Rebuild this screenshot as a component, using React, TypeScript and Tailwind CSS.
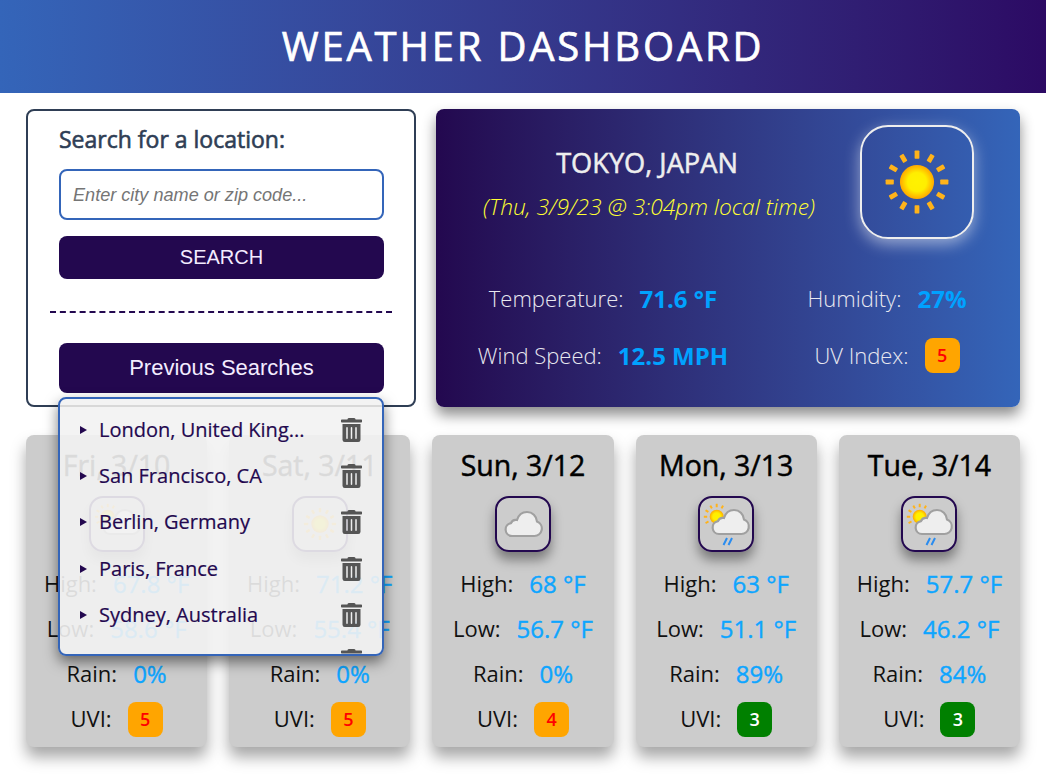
import type React from "react"
import { FaTrashAlt } from "react-icons/fa"

const FONT = "font-['Open_Sans',sans-serif]"
const ARIAL = "font-['Liberation_Sans',Arial,sans-serif]"

type IconKind = "sun" | "cloud" | "partly" | "showers"

function SunShape({ cx, cy, r, rays }: { cx: number; cy: number; r: number; rays: number[] }) {
  const id = `sun-${cx}-${cy}`
  return (
    <g>
      <defs>
        <radialGradient id={id}>
          <stop offset="0%" stopColor="#fff200" />
          <stop offset="55%" stopColor="#ffee00" />
          <stop offset="100%" stopColor="#ffa800" />
        </radialGradient>
      </defs>
      {rays.map((a) => (
        <rect
          key={a}
          x={cx - r * 0.14}
          y={cy - r * 1.84}
          width={r * 0.28}
          height={r * 0.48}
          rx={r * 0.04}
          fill="#ffb31a"
          transform={`rotate(${a} ${cx} ${cy})`}
        />
      ))}
      <circle cx={cx} cy={cy} r={r} fill={`url(#${id})`} />
    </g>
  )
}

const ALL_RAYS = [0, 30, 60, 90, 120, 150, 180, 210, 240, 270, 300, 330]
const PARTIAL_RAYS = [-120, -90, -60, -30, 0, 30]
const CLOUD = "M7 24a6.500 6.500 0 0 1-1-12.900C7 8.500 9.500 7.500 12 8C13.500 3 17.500 0 22 0c5.500 0 9.500 4 10 9.500a7.500 7.500 0 0 1-3 14.500z"

function WeatherIcon({ kind }: { kind: IconKind }) {
  return (
    <svg viewBox="0 0 52 52" className="h-full w-full">
      {kind === "sun" && <SunShape cx={26} cy={26} r={8.7} rays={ALL_RAYS} />}
      {kind === "cloud" && <path transform="translate(8 14)" d={CLOUD} fill="#eeeeee" stroke="#a0a0a0" strokeWidth="2.200" />}
      {kind === "partly" && (
        <>
          <SunShape cx={16.7} cy={18.7} r={7} rays={PARTIAL_RAYS} />
          <path transform="translate(12 12)" d={CLOUD} fill="#eeeeee" stroke="#a0a0a0" strokeWidth="2.200" />
        </>
      )}
      {kind === "showers" && (
        <>
          <SunShape cx={16.7} cy={18.7} r={7} rays={PARTIAL_RAYS} />
          <path transform="translate(12 12)" d={CLOUD} fill="#eeeeee" stroke="#a0a0a0" strokeWidth="2.200" />
          <path d="M23.500 47l3.500-7M28.500 47l3.500-7" stroke="#2a8cf0" strokeWidth="2" />
        </>
      )}
    </svg>
  )
}

function UvBadge({ uv, color, text }: { uv: number; color: string; text: string }) {
  return (
    <span className={`flex h-[35px] w-[35px] items-center justify-center rounded-lg text-[18px] font-semibold ${color} ${text}`}>
      {uv}
    </span>
  )
}

interface Day {
  date: string
  icon: IconKind
  high: string
  low: string
  rain: string
  uv: number
  color: string
  text: string
}

const days: Day[] = [
  { date: "Fri, 3/10", icon: "partly", high: "67.8 °F", low: "58.6 °F", rain: "0%", uv: 5, color: "bg-[#ffa500]", text: "text-[#ff0000]" },
  { date: "Sat, 3/11", icon: "sun", high: "71.2 °F", low: "55.4 °F", rain: "0%", uv: 5, color: "bg-[#ffa500]", text: "text-[#ff0000]" },
  { date: "Sun, 3/12", icon: "cloud", high: "68 °F", low: "56.7 °F", rain: "0%", uv: 4, color: "bg-[#ffa500]", text: "text-[#ff0000]" },
  { date: "Mon, 3/13", icon: "showers", high: "63 °F", low: "51.1 °F", rain: "89%", uv: 3, color: "bg-[#008000]", text: "text-white" },
  { date: "Tue, 3/14", icon: "showers", high: "57.7 °F", low: "46.2 °F", rain: "84%", uv: 3, color: "bg-[#008000]", text: "text-white" },
]

const previous = ["London, United King...", "San Francisco, CA", "Berlin, Germany", "Paris, France", "Sydney, Australia", ""]

function Stat({ label, value }: { label: string; value: string }) {
  return (
    <div className="flex h-[45px] items-center justify-center gap-4 pb-[2px]">
      <span className="text-[22px] text-[#111]">{label}</span>
      <span className="text-[24px] text-[#0ea5ff] [-webkit-text-stroke:0.4px]">{value}</span>
    </div>
  )
}

function HeroStat({ label, children }: { label: string; children: React.ReactNode }) {
  return (
    <div className="flex items-center justify-center gap-4">
      <span className="text-[22px] font-light">{label}</span>
      {children}
    </div>
  )
}

function DayCard({ day }: { day: Day }) {
  return (
    <div className="flex flex-col items-center rounded-lg bg-[#cccccc] pt-[11px] pb-[5px] shadow-[0_10px_15px_rgba(0,0,0,0.35)]">
      <h3 className="text-[28.500px] leading-[38px] text-black [-webkit-text-stroke:0.5px]">{day.date}</h3>
      <div className="mt-[12px] mb-[10px] h-[56px] w-[56px] rounded-[14px] border-2 border-[#23084f] shadow-[0_8px_12px_rgba(0,0,0,0.4)]">
        <WeatherIcon kind={day.icon} />
      </div>
      <div className="w-full">
        <Stat label="High:" value={day.high} />
        <Stat label="Low:" value={day.low} />
        <Stat label="Rain:" value={day.rain} />
        <div className="flex h-[45px] items-center justify-center gap-4">
          <span className="pb-[2px] text-[22px] text-[#111]">UVI:</span>
          <UvBadge uv={day.uv} color={day.color} text={day.text} />
        </div>
      </div>
    </div>
  )
}

export default function App() {
  return (
    <div className={`h-[781px] w-[1046px] overflow-hidden bg-white ${FONT}`}>
      <header className="flex h-[93px] items-center justify-center bg-gradient-to-r from-[#3465b9] to-[#2c0a64] pb-[2px]">
        <h1 className="text-[40px] tracking-[2.800px] text-white [-webkit-text-stroke:0.7px]">WEATHER DASHBOARD</h1>
      </header>

      <main className="px-[26px] pt-[16px]">
        <div className="flex gap-[20px]">
          {/* search panel */}
          <section className="relative h-[298px] w-[390px] rounded-lg border-2 border-[#2f3e55] px-[31px] pt-[12px]">
            <h2 className="text-[23px] leading-[32px] text-[#2f3e55] [-webkit-text-stroke:0.6px]">Search for a location:</h2>
            <input
              readOnly
              placeholder="Enter city name or zip code..."
              className={`mt-[14px] block h-[51px] w-[325px] rounded-lg border-2 border-[#3465b9] bg-white px-[12px] pt-[1px] text-[18.100px] italic outline-none placeholder:text-[#757575] ${ARIAL}`}
            />
            <button className={`mt-[16px] block h-[43px] w-[325px] rounded-lg bg-[#23084f] pb-[2px] text-[20px] text-[#f3ecff] ${ARIAL}`}>
              SEARCH
            </button>
            <div className="-mx-[9px] mt-[32px] border-t-2 border-dashed border-[#23084f]" />
            <button className={`mt-[30px] block h-[50px] w-[325px] rounded-lg bg-[#23084f] pb-[2px] text-[22px] text-[#f3ecff] ${ARIAL}`}>
              Previous Searches
            </button>

            {/* dropdown of past searches lies over the forecast */}
            <div className="absolute left-[30px] top-[286px] z-10 h-[259px] w-[326px] overflow-hidden rounded-lg border-2 border-[#3465b9] bg-[#f2f2f2]/90 shadow-[0_6px_14px_rgba(0,0,0,0.5)]">
              <div className="mt-[6px] h-[2px] bg-[#d8d8d8]" />
              <ul>
                {previous.map((city, i) => (
                  <li key={i} className="flex h-[46.200px] items-center pl-[20px] pr-[20px]">
                    {city && <span className="mr-[12px] h-0 w-0 border-y-[4px] border-l-[7px] border-y-transparent border-l-[#23084f]" />}
                    <span className="flex-1 text-[20px] text-[#23084f] [-webkit-text-stroke:0.2px]">{city}</span>
                    <FaTrashAlt className="h-[24px] w-[21px] text-[#555555]" />
                  </li>
                ))}
              </ul>
            </div>
          </section>

          {/* current weather */}
          <section className="h-[298px] w-[584px] rounded-lg bg-gradient-to-r from-[#23084f] to-[#3465b9] shadow-[0_8px_14px_rgba(0,0,0,0.45)]">
            <div className="flex pt-[16px]">
              <div className="w-[422px] pt-[20px] text-center">
                <h2 className="text-[27.200px] leading-[36px] text-[#eeeeee] [-webkit-text-stroke:0.5px]">TOKYO, JAPAN</h2>
                <p className="mt-[10px] pl-[4px] text-[22.800px] font-light italic leading-[32px] text-[#ffff33]">
                  (Thu, 3/9/23 @ 3:04pm local time)
                </p>
              </div>
              <div className="ml-[2px] h-[114px] w-[114px] rounded-[28px] border-2 border-[#eeeeee] p-[4px] shadow-[0_5px_15px_rgba(255,255,255,0.5)]">
                <WeatherIcon kind="sun" />
              </div>
            </div>
            <div className="mt-[31px] grid grid-cols-[334px_234px] grid-rows-[57px_57px] items-center text-[#e8e8f0]">
              <HeroStat label="Temperature:">
                <span className="text-[24px] font-bold text-[#00a2ff]">71.6 °F</span>
              </HeroStat>
              <HeroStat label="Humidity:">
                <span className="text-[24px] font-bold text-[#00a2ff]">27%</span>
              </HeroStat>
              <HeroStat label="Wind Speed:">
                <span className="text-[24px] font-bold text-[#00a2ff]">12.5 MPH</span>
              </HeroStat>
              <HeroStat label="UV Index:">
                <UvBadge uv={5} color="bg-[#ffa500]" text="text-[#ff0000]" />
              </HeroStat>
            </div>
          </section>
        </div>

        <div className="mt-[28px] grid grid-cols-5 gap-[22px]">
          {days.map((day) => (
            <DayCard key={day.date} day={day} />
          ))}
        </div>
      </main>
    </div>
  )
}
